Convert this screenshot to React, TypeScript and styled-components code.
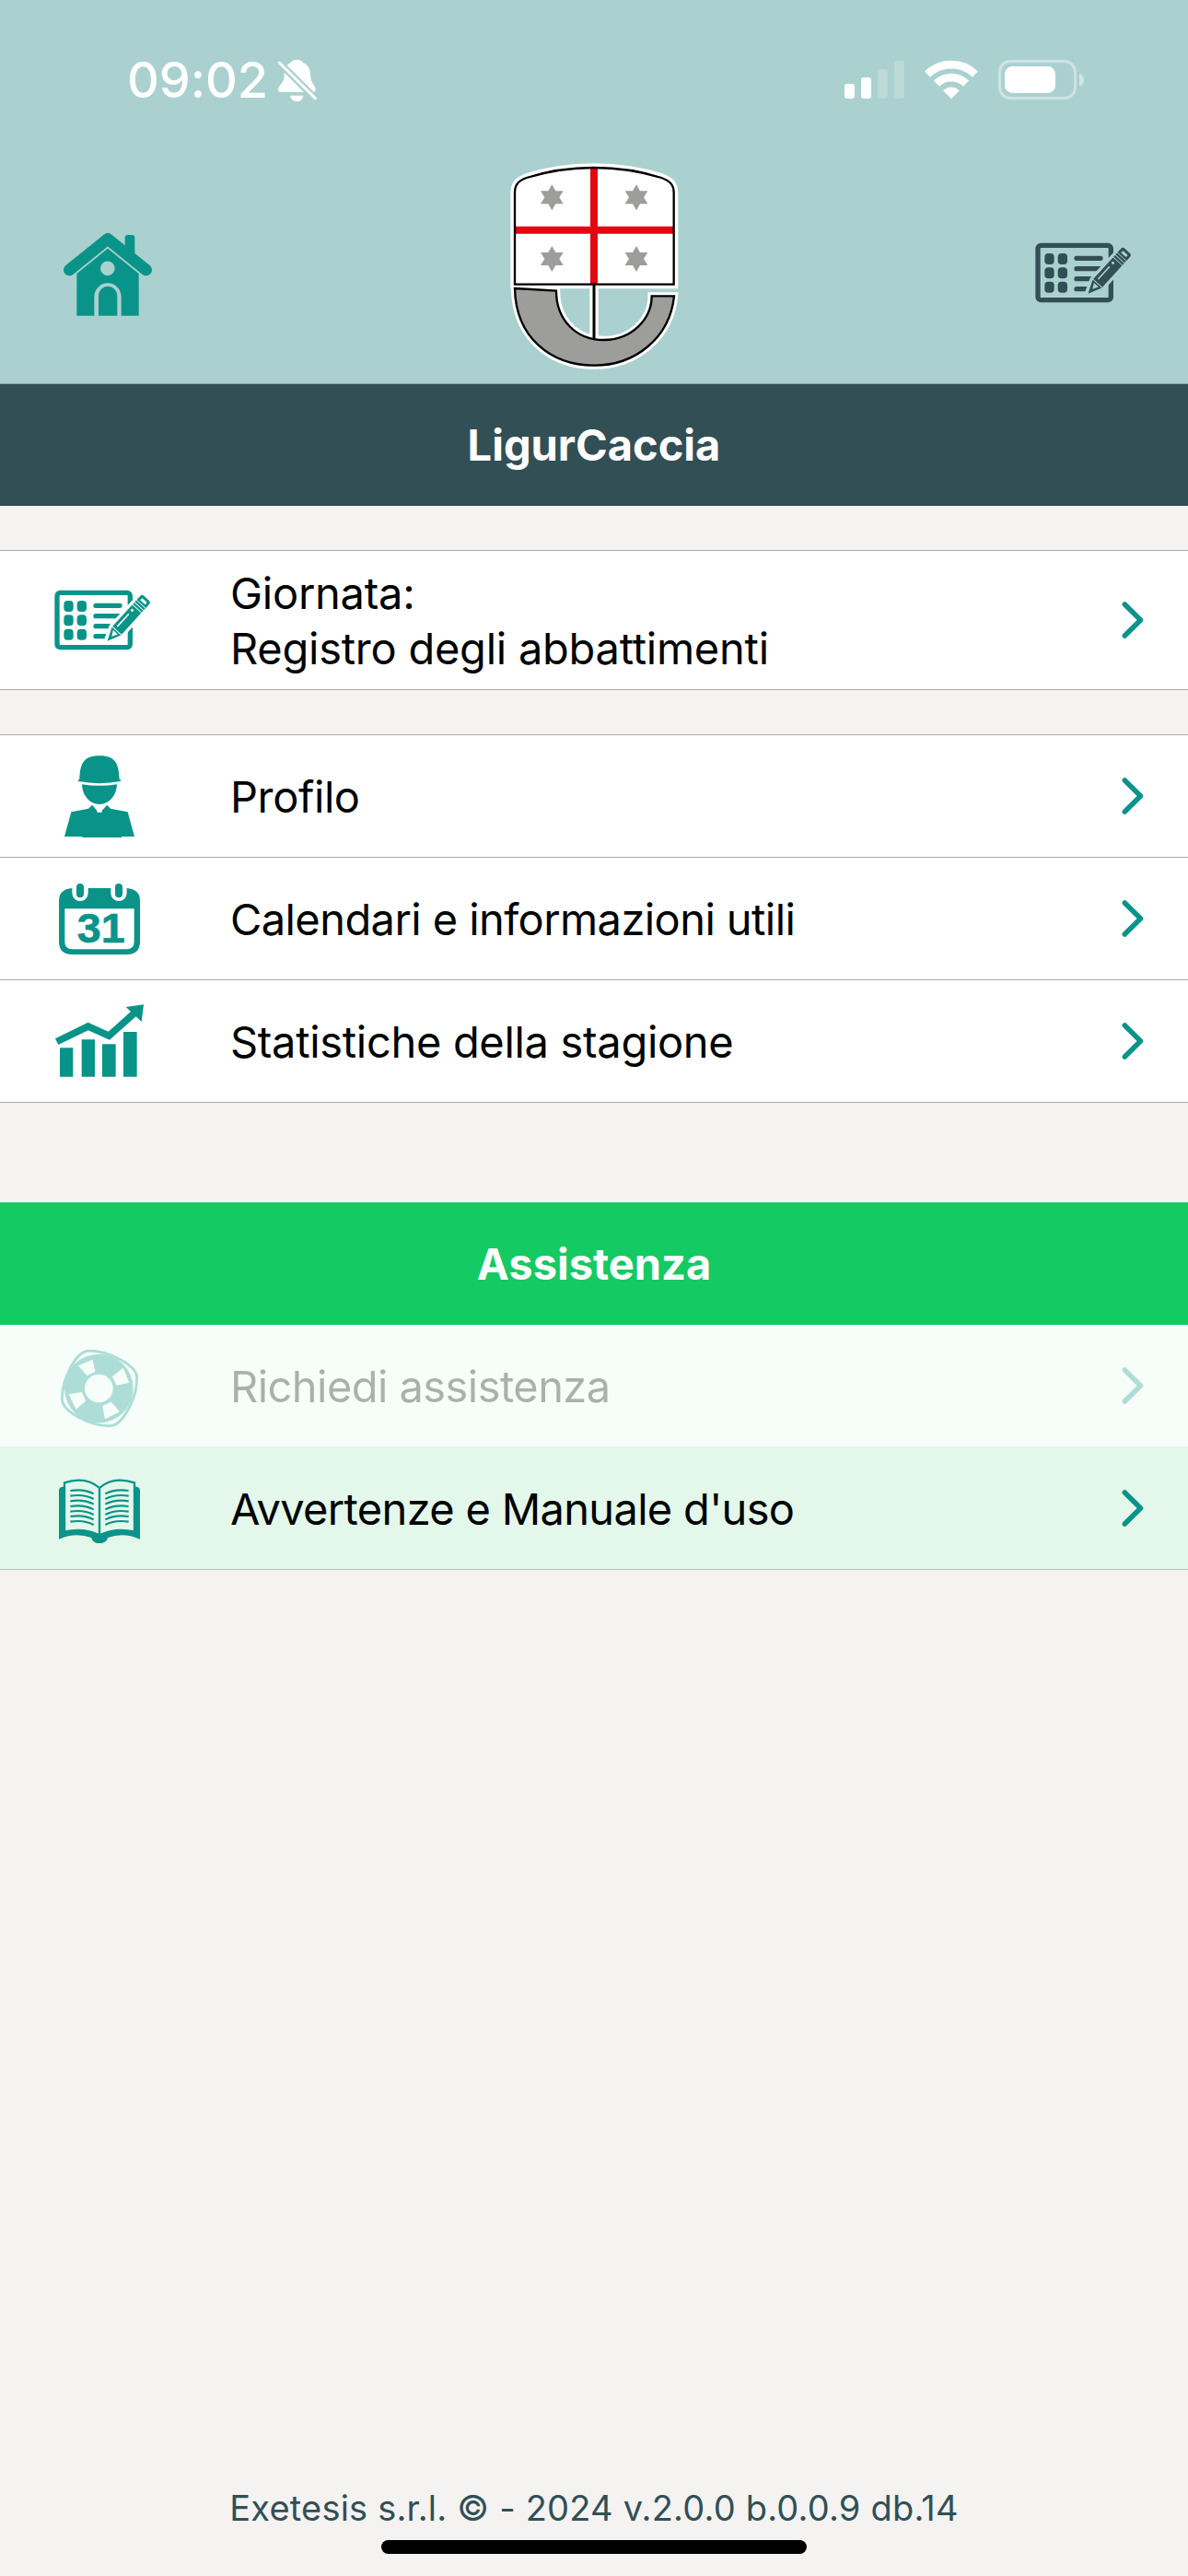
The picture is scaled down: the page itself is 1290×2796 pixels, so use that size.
import React from 'react'
import styled, { createGlobalStyle } from 'styled-components'

const colors = {
  header: '#aad1cf',
  dark: '#324f55',
  teal: '#0a9489',
  green: '#14ca62',
  page: '#f4f3f2',
}

const GlobalStyle = createGlobalStyle`
  body {
    margin: 0;
    background: ${colors.page};
    font-family: Inter, "Liberation Sans", sans-serif;
  }
`

const Screen = styled.div`
  display: flex;
  flex-direction: column;
  width: 1290px;
  height: 2796px;
  overflow: hidden;
  background: ${colors.page};
`

const Header = styled.header`
  height: 416px;
  background: ${colors.header};
`

const StatusBar = styled.div`
  display: flex;
  align-items: center;
  box-sizing: border-box;
  height: 170px;
  padding: 3px 113px 0 138px;
  color: #fff;
`

const Clock = styled.span`
  margin-right: 10px;
  font-size: 54px;
  line-height: 64px;
  font-weight: 500;
  letter-spacing: -0.1px;
`

const StatusIcons = styled.div`
  display: flex;
  align-items: center;
  gap: 22px;
  margin-left: auto;
`

const Nav = styled.nav`
  display: grid;
  grid-template-columns: 1fr auto 1fr;
  height: 240px;
  padding: 0 45px 0 50px;
`

const NavButton = styled.button<{ $end?: boolean }>`
  align-self: center;
  justify-self: ${(p) => (p.$end ? 'end' : 'start')};
  margin: 12px 0 0;
  padding: 0;
  border: 0;
  background: none;
  color: ${(p) => (p.$end ? colors.dark : colors.teal)};
  line-height: 0;
`

const Logo = styled.svg`
  width: 210px;
  height: 240px;
  margin-right: 5px;
`

const SectionTitle = styled.h2<{ $bg: string; $top?: string; $bottom?: string }>`
  box-sizing: border-box;
  height: 133px;
  margin: 0;
  border-top: 1px solid ${(p) => p.$top || p.$bg};
  border-bottom: 1px solid ${(p) => p.$bottom || p.$bg};
  background: ${(p) => p.$bg};
  color: #fff;
  font-size: 47px;
  line-height: 131px;
  font-weight: 700;
  letter-spacing: 0;
  text-align: center;
`

const Group = styled.ul<{ $gap?: number; $flush?: boolean }>`
  margin: ${(p) => p.$gap || 0}px 0 0;
  padding: 0;
  list-style: none;
  border-top: ${(p) => (p.$flush ? 0 : 1)}px solid #acacac;
`

const Row = styled.li<{ $bg?: string; $edge?: string; $tall?: boolean }>`
  display: flex;
  align-items: center;
  height: ${(p) => (p.$tall ? 150 : 132)}px;
  padding: 0 42px 0 40px;
  border-bottom: 1px solid ${(p) => p.$edge || '#acacac'};
  background: ${(p) => p.$bg || '#fff'};
  color: ${colors.teal};
`

const Faded = styled.div<{ $disabled?: boolean }>`
  display: flex;
  flex: 1;
  align-items: center;
  opacity: ${(p) => (p.$disabled ? 0.3 : 1)};
`

const Label = styled.span<{ $tracking?: number }>`
  flex: 1;
  margin-left: 70px;
  padding-top: 2px;
  color: #000;
  font-size: 47px;
  line-height: 60px;
  letter-spacing: ${(p) => p.$tracking ?? -0.4}px;
  white-space: pre-line;
`

const Assistance = styled.section`
  margin-top: 108px;
`

const Footer = styled.footer`
  display: flex;
  flex-direction: column;
  align-items: center;
  gap: 12px;
  margin-top: auto;
  padding-bottom: 24px;
  color: ${colors.dark};
  font-size: 38px;
  line-height: 46px;
  letter-spacing: 0.2px;
`

const HomeIndicator = styled.div`
  width: 462px;
  height: 15px;
  border-radius: 8px;
  background: #000;
`

type IconProps = {
  box: string
  children: React.ReactNode
}

const Icon: React.FC<IconProps> = ({ box, children }) => (
  <svg width="140" height="130" viewBox={box} fill="currentColor">
    {children}
  </svg>
)

const HomeIcon = () => (
  <Icon box="0 3 420 390">
    <path d="M76 189 201 88 326 189" fill="none" stroke="currentColor" strokeWidth="38" strokeLinecap="round" strokeLinejoin="round" />
    <path d="M257 130V84q0-9 9-9h14q9 0 9 9v62Z" />
    <path
      fillRule="evenodd"
      d="M100 201 201 119 302 201V338H245V276a44 44 0 0 0-88 0V338H100ZM224 184a23.500 23.500 0 1 0-47 0a23.500 23.500 0 1 0 47 0Z"
    />
    <path d="M171 338V273a30.500 30.500 0 0 1 61 0V338Z" />
  </Icon>
)

const RegisterIcon = ({ id }: { id: string }) => (
  <Icon box="15 -26 420 390">
    <mask id={id} maskUnits="userSpaceOnUse" x="0" y="0" width="450" height="330">
      <rect width="450" height="330" fill="#fff" />
      <g transform="translate(246 236) rotate(-47.600)">
        <path d="M-4 0 42-19H184V19H42Z" fill="#000" stroke="#000" strokeWidth="21" strokeLinejoin="round" />
      </g>
    </mask>
    <g mask={`url(#${id})`}>
      <rect x="81" y="80" width="238" height="178" rx="10" fill="none" stroke="currentColor" strokeWidth="16" />
      <path d="M207 122H285M207 156H285M207 189H270M207 222H250" stroke="currentColor" strokeWidth="16" strokeLinecap="round" />
    </g>
    {[106, 152, 198].map((y) => (
      <g key={y}>
        <rect x="103" y={y} width="31" height="36" rx="12" />
        <rect x="146" y={y} width="31" height="36" rx="12" />
      </g>
    ))}
    <g transform="translate(246 236) rotate(-47.600)">
      <path fillRule="evenodd" d="M-2 0 42-20V20ZM19 0 37 10V-10Z" />
      <path
        fillRule="evenodd"
        d="M45-20H140V20H45ZM57-10.500a2.500 2.500 0 0 0 0 5H108a2.500 2.500 0 0 0 0-5ZM122-8a4.500 4.500 0 1 0 9 0a4.500 4.500 0 1 0-9 0Z"
      />
      <path d="M143-20h7V20h-7ZM152.500-20h7V20h-7Z" />
      <path fillRule="evenodd" d="M162-20H178q9 0 9 9V11q0 9-9 9H162ZM169-11V11H175q3 0 3-3V-8q0-3-3-3Z" />
    </g>
  </Icon>
)

const ProfileIcon = () => (
  <Icon box="0 -3 420 390">
    <path d="M135 144V139L139 138C141 92 148 61 204 61S267 92 269 138L273 139V144Q204 157 135 144Z" />
    <path d="M147 154Q204 163 261 154C260 192 234 219 204 219S148 192 147 154Z" />
    <path d="M112 244 168 233 180 221 196 239V245H212V239L229 221 240 233 296 244 318 324H276V327H148V324H90Z" />
  </Icon>
)

const CalendarIcon = () => (
  <Icon box="0 -24 420 390">
    <path
      fillRule="evenodd"
      d="M115 72V88a26 26 0 0 0 52 0V72H241V88a26 26 0 0 0 52 0V72Q336 76 336 112V246Q336 288 292 288H116Q72 288 72 246V112Q72 76 115 72ZM91 139V247Q91 271 116 271H292Q317 271 317 247V139Z"
    />
    <rect x="129" y="57" width="24" height="46" rx="12" />
    <rect x="255" y="57" width="24" height="46" rx="12" />
    <text x="131" y="248" fontFamily="'Liberation Sans', sans-serif" fontWeight="700" fontSize="131" textLength="156" lengthAdjust="spacingAndGlyphs" stroke="currentColor" strokeWidth="2">
      31
    </text>
  </Icon>
)

const StatsIcon = () => (
  <Icon box="0 375 420 390">
    <path d="M75 592H118V686H75ZM146 565H189V686H146ZM213 580H257V686H213ZM282 540H326V686H282Z" />
    <path d="M65 572 167 522 235 553 322 475" fill="none" stroke="currentColor" strokeWidth="23" />
    <path d="M348 451 290 459 341 507Z" />
  </Icon>
)

const LifebuoyIcon = () => (
  <Icon box="0 -3 420 390">
    <path
      d="M170 79C235 79 326 125 326 167C326 232 280 323 238 323C173 323 82 277 82 235C82 170 128 79 170 79Z"
      fill="none"
      stroke="currentColor"
      strokeWidth="9"
    />
    <path
      fillRule="evenodd"
      d="M314 201a112 112 0 1 0-224 0a112 112 0 1 0 224 0ZM248 201a46 46 0 1 0-92 0a46 46 0 1 0 92 0ZM135 127 182 107 190 147 163 159ZM281 134 301 182 260 191 246 163ZM214 258 242 245 270 277 222 301ZM104 220 147 213 159 242 128 269Z"
    />
  </Icon>
)

const BookIcon = () => (
  <Icon box="0 396 420 390">
    <path d="M87 521C76 521 72 526 72 532V692Q125 668 178 687C180 700 190 705 204 705S229 700 231 687Q283 668 336 692V532C336 526 332 521 321 521V664H317Q257 650 204 675Q151 650 92 664H87Z" />
    <path d="M90 666V508Q160 486 204 525Q248 486 318 508V666M204 525V676" fill="none" stroke="currentColor" strokeWidth="7" />
    <g fill="none" stroke="currentColor" strokeWidth="6.500">
      {[534, 551, 568, 585, 602, 618, 635].map((y) => (
        <path key={y} d={`M109 ${y}Q153 ${y - 7} 185 ${y + 10}M299 ${y}Q255 ${y - 7} 223 ${y + 10}`} />
      ))}
    </g>
  </Icon>
)

const Chevron = () => (
  <svg width="34" height="44" viewBox="0 0 34 44" fill="none" stroke="currentColor" strokeWidth="5.500" strokeLinecap="round" strokeLinejoin="round">
    <path d="M7.300 5 24.500 22 7.300 39" />
  </svg>
)

const BellOff = () => (
  <svg width="44" height="48" viewBox="543 72 132 144" fill="#fff">
    <mask id="bell" maskUnits="userSpaceOnUse" x="540" y="70" width="140" height="150">
      <rect x="540" y="70" width="140" height="150" fill="#fff" />
      <path d="M540 77 680 217" stroke="#000" strokeWidth="23" />
    </mask>
    <g mask="url(#bell)">
      <path d="M607 77C617 77 624 81 628 88C646 94 651 112 652 134C654 154 668 162 668 174Q668 183 660 183H555Q546 183 546 174C546 162 564 154 566 134C566 112 570 94 586 88C590 81 597 77 607 77Z" />
    </g>
    <path d="M585 194H628C626 206 618 213 607 213S587 206 585 194Z" />
    <path d="M550 87 667 203" stroke="#fff" strokeWidth="9" strokeLinecap="round" />
  </svg>
)

const Signal = () => (
  <svg width="65" height="45" viewBox="78 72 195 135" fill="#fff">
    <rect x="78" y="153" width="33" height="48" rx="9" />
    <rect x="132" y="132" width="33" height="69" rx="9" />
    <rect x="186" y="105" width="33" height="96" rx="9" opacity="0.2" />
    <rect x="240" y="78" width="33" height="123" rx="9" opacity="0.2" />
  </svg>
)

const Wifi = () => (
  <svg width="58" height="45" viewBox="340 72 174 135" fill="none" stroke="#fff" strokeWidth="26">
    <path d="M349 122A112 112 0 0 1 505 122" />
    <path d="M379 152A68 68 0 0 1 475 152" />
    <path d="M427 200 402 175A36 36 0 0 1 452 175Z" fill="#fff" strokeWidth="3" strokeLinejoin="round" />
  </svg>
)

const Battery = () => (
  <svg width="93" height="45" viewBox="582 72 279 135" fill="#fff">
    <rect x="586.500" y="79.500" width="246" height="120" rx="35" fill="none" stroke="#fff" strokeWidth="9" opacity="0.42" />
    <rect x="603" y="96" width="165" height="87" rx="25" />
    <path d="M846 119C856 123 861 131 861 140S856 157 846 161Z" opacity="0.45" />
  </svg>
)

const LiguriaLogo = () => {
  const shield = 'M57 416V118C57 88 72 78 95 69Q200 36 315 36T535 69C558 78 575 88 575 118V416Z'
  const hull = 'M57 429 192 437C192 530 255 597 347 597C437 597 503 530 503 454H576C562 590 450 680 315 680C175 680 60 590 57 429Z'
  const star = 'M0-42 12-21 37-21 24 0 37 21 12 21 0 42-12 21-37 21-24 0-37-21-12-21Z'
  return (
    <Logo viewBox="0 0 630 720">
      <g fill="none" stroke="#fff" strokeWidth="28">
        <path d={shield} />
        <path d={hull} strokeWidth="25" />
        <path d="M315 416V590" />
      </g>
      <path d={hull} fill="#9d9d9b" stroke="#000" strokeWidth="7" />
      <path d="M315 416V594" stroke="#000" strokeWidth="9" />
      <path d={shield} fill="#fff" />
      <path d="M303 38H327V227H573V251H327V414H303V251H58V227H303Z" fill="#e30613" />
      <path d={shield} fill="none" stroke="#000" strokeWidth="7" />
      <g fill="#9d9d9b">
        <path d={star} transform="translate(178 133)" />
        <path d={star} transform="translate(453 133)" />
        <path d={star} transform="translate(178 333)" />
        <path d={star} transform="translate(453 333)" />
      </g>
    </Logo>
  )
}

type MenuRowProps = {
  icon: React.ReactNode
  label: string
  tracking?: number
  bg?: string
  edge?: string
  tall?: boolean
  disabled?: boolean
}

const MenuRow: React.FC<MenuRowProps> = ({ icon, label, tracking, bg, edge, tall, disabled }) => (
  <Row $bg={bg} $edge={edge} $tall={tall}>
    <Faded $disabled={disabled}>
      {icon}
      <Label $tracking={tracking}>{label}</Label>
      <Chevron />
    </Faded>
  </Row>
)

const App: React.FC = () => {
  return (
    <Screen>
      <GlobalStyle />
      <Header>
        <StatusBar>
          <Clock>09:02</Clock>
          <BellOff />
          <StatusIcons>
            <Signal />
            <Wifi />
            <Battery />
          </StatusIcons>
        </StatusBar>
        <Nav>
          <NavButton>
            <HomeIcon />
          </NavButton>
          <LiguriaLogo />
          <NavButton $end>
            <RegisterIcon id="nav-register" />
          </NavButton>
        </Nav>
      </Header>
      <SectionTitle $bg={colors.dark} $top="#84a3a2" $bottom="#2a4248">LigurCaccia</SectionTitle>
      <Group $gap={48}>
        <MenuRow tall tracking={-0.25} icon={<RegisterIcon id="row-register" />} label={'Giornata:\nRegistro degli abbattimenti'} />
      </Group>
      <Group $gap={48}>
        <MenuRow icon={<ProfileIcon />} label="Profilo" />
        <MenuRow icon={<CalendarIcon />} tracking={-0.58} label="Calendari e informazioni utili" />
        <MenuRow icon={<StatsIcon />} tracking={-0.32} label="Statistiche della stagione" />
      </Group>
      <Assistance>
        <SectionTitle $bg={colors.green}>Assistenza</SectionTitle>
        <Group $flush>
          <MenuRow disabled bg="#f7fefa" edge="#e9f0ec" tracking={-0.55} icon={<LifebuoyIcon />} label="Richiedi assistenza" />
          <MenuRow bg="#e3f7ea" edge="#b3c3b9" tracking={-0.68} icon={<BookIcon />} label="Avvertenze e Manuale d'uso" />
        </Group>
      </Assistance>
      <Footer>
        <span>Exetesis s.r.l. © - 2024 v.2.0.0 b.0.0.9 db.14</span>
        <HomeIndicator />
      </Footer>
    </Screen>
  )
}

export default App
